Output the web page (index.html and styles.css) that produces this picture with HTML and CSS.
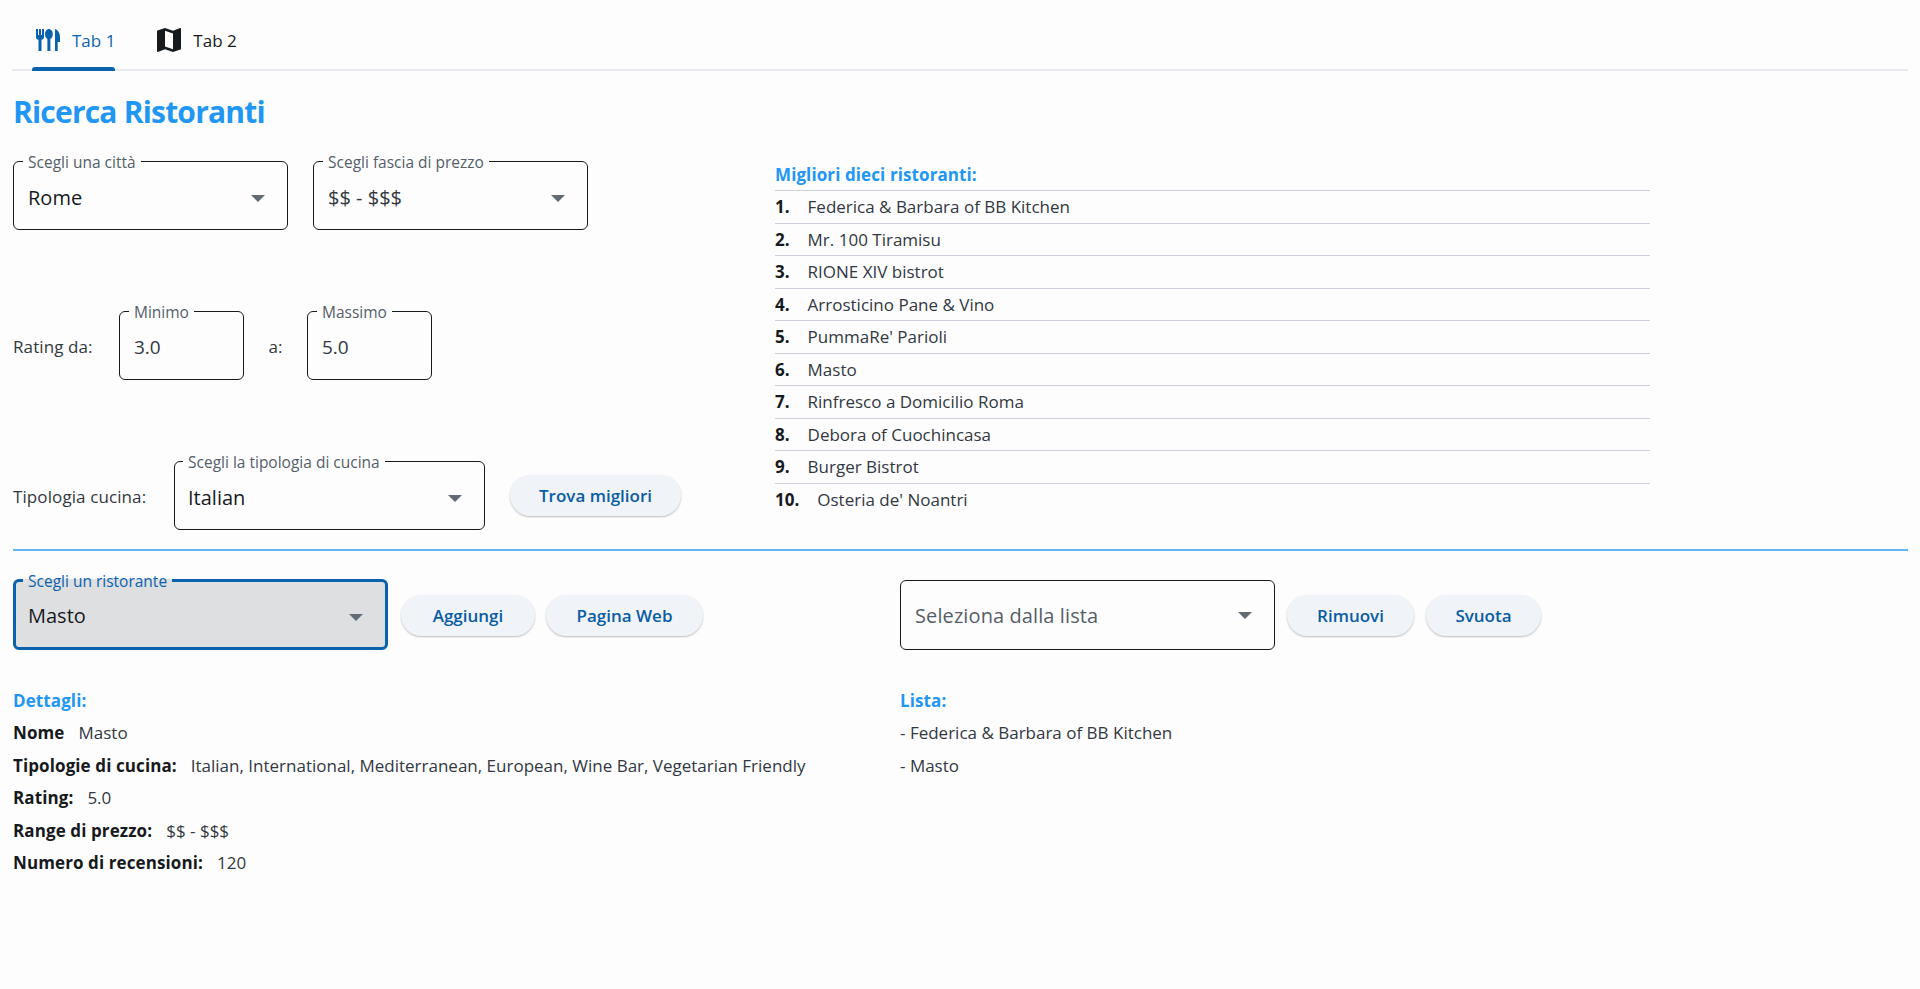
FILE: index.html
```html
<!DOCTYPE html>
<html lang="en">
<head>
    <meta charset="UTF-8">
    <meta name="viewport" content="width=device-width, initial-scale=1.0">
    <title>Ricerca Ristoranti</title>
    <link rel="stylesheet" href="styles.css">
</head>
<body>
    <nav class="tabs">
        <div class="tab active">
            <svg class="tab-icon" viewBox="0 0 24 24" fill="currentColor"><path d="M0 1h2v6h1V1h2v6h1V1h2v8c0 1.500-1 2.600-2.500 2.800V23h-3V11.800C1 11.600 0 10.500 0 9z"/><path d="M14 1c2.200 0 3.800 2.200 3.800 5 0 2.500-1.100 4.500-2.400 5V23h-3V11c-1.300-.5-2.400-2.500-2.400-5 0-2.800 1.800-5 4-5z" transform="translate(-1)"/><path d="M19 1c3 1 5 4 5 8v5h-2.300v9H19z"/></svg>
            <span>Tab 1</span>
        </div>
        <div class="tab">
            <svg class="tab-icon" viewBox="3 3 18 18" fill="currentColor"><path d="m20.500 3-.16.03L15 5.100 9 3 3.360 4.900c-.21.07-.36.25-.36.48V20.500c0 .28.22.5.5.5l.16-.03L9 18.900l6 2.100 5.640-1.900c.21-.07.36-.25.36-.48V3.500c0-.28-.22-.5-.5-.5zM15 19l-6-2.110V5l6 2.110V19z"/></svg>
            <span>Tab 2</span>
        </div>
    </nav>

    <h1 class="title">Ricerca Ristoranti</h1>

    <section class="search">
        <div class="filters">
            <div class="filter-row">
                <fieldset class="field field-city">
                    <legend>Scegli una città</legend>
                    <span class="value strong">Rome</span>
                    <svg class="arrow" viewBox="0 0 14 7"><path d="M0 0h14L7 7z"/></svg>
                </fieldset>
                <fieldset class="field field-city">
                    <legend>Scegli fascia di prezzo</legend>
                    <span class="value">$$ - $$$</span>
                    <svg class="arrow" viewBox="0 0 14 7"><path d="M0 0h14L7 7z"/></svg>
                </fieldset>
            </div>
            <div class="filter-row">
                <span class="label rating-label">Rating da:</span>
                <fieldset class="field field-num">
                    <legend>Minimo</legend>
                    <span class="value">3.0</span>
                </fieldset>
                <span class="label rating-to">a:</span>
                <fieldset class="field field-num">
                    <legend>Massimo</legend>
                    <span class="value">5.0</span>
                </fieldset>
            </div>
            <div class="filter-row">
                <span class="label cuisine-label">Tipologia cucina:</span>
                <fieldset class="field field-cuisine">
                    <legend>Scegli la tipologia di cucina</legend>
                    <span class="value strong">Italian</span>
                    <svg class="arrow" viewBox="0 0 14 7"><path d="M0 0h14L7 7z"/></svg>
                </fieldset>
                <button class="btn btn-find">Trova migliori</button>
            </div>
        </div>

        <div class="top-list">
            <h3 class="heading">Migliori dieci ristoranti:</h3>
            <ul class="rank-list">
                <li><b>1.</b>Federica &amp; Barbara of BB Kitchen</li>
                <li><b>2.</b>Mr. 100 Tiramisu</li>
                <li><b>3.</b>RIONE XIV bistrot</li>
                <li><b>4.</b>Arrosticino Pane &amp; Vino</li>
                <li><b>5.</b>PummaRe' Parioli</li>
                <li><b>6.</b>Masto</li>
                <li><b>7.</b>Rinfresco a Domicilio Roma</li>
                <li><b>8.</b>Debora of Cuochincasa</li>
                <li><b>9.</b>Burger Bistrot</li>
                <li><b>10.</b>Osteria de' Noantri</li>
            </ul>
        </div>
    </section>

    <hr class="divider">

    <section class="bottom">
        <div class="col col-left">
            <div class="action-row">
                <fieldset class="field field-wide focused">
                    <legend>Scegli un ristorante</legend>
                    <span class="value">Masto</span>
                    <svg class="arrow" viewBox="0 0 14 7"><path d="M0 0h14L7 7z"/></svg>
                </fieldset>
                <button class="btn btn-add">Aggiungi</button>
                <button class="btn btn-web">Pagina Web</button>
            </div>
            <h3 class="heading detail-heading">Dettagli:</h3>
            <div class="info"><b>Nome</b>Masto</div>
            <div class="info"><b>Tipologie di cucina:</b>Italian, International, Mediterranean, European, Wine Bar, Vegetarian Friendly</div>
            <div class="info"><b>Rating:</b>5.0</div>
            <div class="info"><b>Range di prezzo:</b>$$ - $$$</div>
            <div class="info"><b>Numero di recensioni:</b>120</div>
        </div>
        <div class="col">
            <div class="action-row">
                <fieldset class="field field-wide no-legend">
                    <span class="value placeholder">Seleziona dalla lista</span>
                    <svg class="arrow" viewBox="0 0 14 7"><path d="M0 0h14L7 7z"/></svg>
                </fieldset>
                <button class="btn btn-remove">Rimuovi</button>
                <button class="btn btn-empty">Svuota</button>
            </div>
            <h3 class="heading detail-heading">Lista:</h3>
            <div class="info">- Federica &amp; Barbara of BB Kitchen</div>
            <div class="info">- Masto</div>
        </div>
    </section>
</body>
</html>
```

FILE: styles.css
```css
body {
    font-family: "Open Sans", "Noto Sans", sans-serif;
    font-size: 17px;
    color: #171a1c;
    background-color: #fdfdfe;
    margin: 0;
    padding: 0 12px 0 13px;
}
.tabs {
    display: flex;
    height: 71px;
    padding-left: 20px;
    gap: 38px;
    border-bottom: 2px solid #e8eaf0;
    box-sizing: border-box;
    margin-left: -1px;
}
.tab {
    display: flex;
    align-items: center;
    gap: 12px;
    height: 71px;
    padding: 19px 0 10px 4px;
    box-sizing: border-box;
    position: relative;
}
.tab.active {
    color: #0a62ad;
}
.tab.active::after {
    content: "";
    position: absolute;
    left: 0;
    right: 0;
    bottom: 0;
    height: 4px;
    background-color: #0a62ad;
    border-radius: 3px 3px 0 0;
}
.tab-icon {
    width: 24px;
    height: 24px;
}
.title {
    font-size: 30px;
    line-height: 40px;
    font-weight: 700;
    color: #2196f3;
    margin: 21px 0 0;
    letter-spacing: -0.8px;
}
.search {
    display: flex;
    margin-top: 21px;
    height: 396px;
}
.filters {
    width: 762px;
    display: flex;
    flex-direction: column;
    gap: 73px;
}
.filter-row {
    display: flex;
    align-items: center;
}
.filter-row .field + .field {
    margin-left: 25px;
}
.field {
    display: flex;
    align-items: center;
    position: relative;
    height: 77px;
    margin: 0;
    padding: 0 14px;
    box-sizing: border-box;
    border: 1px solid #171a1c;
    border-radius: 6px;
    background-color: #fdfdfe;
}
.field legend {
    font-size: 15.500px;
    line-height: 14px;
    color: #555e68;
    padding: 2px 5px 0;
    margin-left: -5px;
}
.field-city { width: 275px; }
.field-num { width: 125px; }
.field-cuisine { width: 311px; padding-left: 13px; }
.field-cuisine legend { margin-left: -5px; }
.field-wide { width: 375px; height: 78px; }
.no-legend { margin-top: 8px; height: 70px; }
.value {
    font-size: 20px;
    color: #32383e;
    padding-bottom: 4px;
}
.field-num .value {
    font-size: 19px;
}
.value.strong {
    color: #171a1c;
}
.placeholder {
    color: #555e68;
    padding-bottom: 0;
    letter-spacing: 0.1px;
}
.arrow {
    position: absolute;
    right: 22px;
    top: 26px;
    width: 14px;
    height: 7px;
    fill: #636b74;
}
.no-legend .arrow {
    top: 31px;
}
.label {
    color: #32383e;
    margin-top: 10px;
    letter-spacing: 0.1px;
}
.rating-label {
    width: 106px;
}
.rating-to {
    width: 63px;
    text-align: center;
}
.cuisine-label {
    width: 161px;
}
.btn {
    font-family: inherit;
    font-size: 17px;
    font-weight: 600;
    color: #0a5ca3;
    background-color: #f0f4f8;
    border: 0;
    border-radius: 21px;
    height: 41px;
    padding: 0;
    margin-top: 8px;
    box-shadow: 0 1px 2px rgba(0, 0, 0, 0.25);
}
.btn-find { width: 171px; margin-left: 25px; }
.btn-add { width: 134px; margin-left: 13px; }
.btn-web { width: 157px; margin-left: 11px; }
.btn-remove { width: 127px; margin-left: 12px; }
.btn-empty { width: 115px; margin-left: 12px; }
.top-list {
    width: 875px;
    padding-top: 8px;
}
.heading {
    font-size: 17px;
    line-height: 28px;
    font-weight: 700;
    letter-spacing: 0.1px;
    color: #2196f3;
    margin: 0 0 1px;
}
.rank-list {
    list-style: none;
    margin: 0;
    padding: 0;
}
.rank-list li {
    line-height: 31.500px;
    border-top: 1px solid #cdd0da;
    color: #32383e;
}
.rank-list b {
    color: #171a1c;
    margin-right: 18px;
}
.divider {
    border: 0;
    height: 2px;
    background-color: #64b5f6;
    margin: 0;
}
.bottom {
    display: flex;
    margin-top: 21px;
}
.col-left {
    width: 887px;
}
.action-row {
    display: flex;
    align-items: center;
    height: 78px;
}
.focused {
    border: 3px solid #0a62ad;
    background-color: #dedfe1;
    padding: 0 12px;
}
.focused legend {
    color: #0a62ad;
}
.focused .value {
    color: #171a1c;
}
.detail-heading {
    margin: 37px 0 2px;
}
.info {
    line-height: 32.500px;
    color: #32383e;
    white-space: nowrap;
}
.info b {
    color: #171a1c;
    margin-right: 14px;
    letter-spacing: 0.1px;
}
```
